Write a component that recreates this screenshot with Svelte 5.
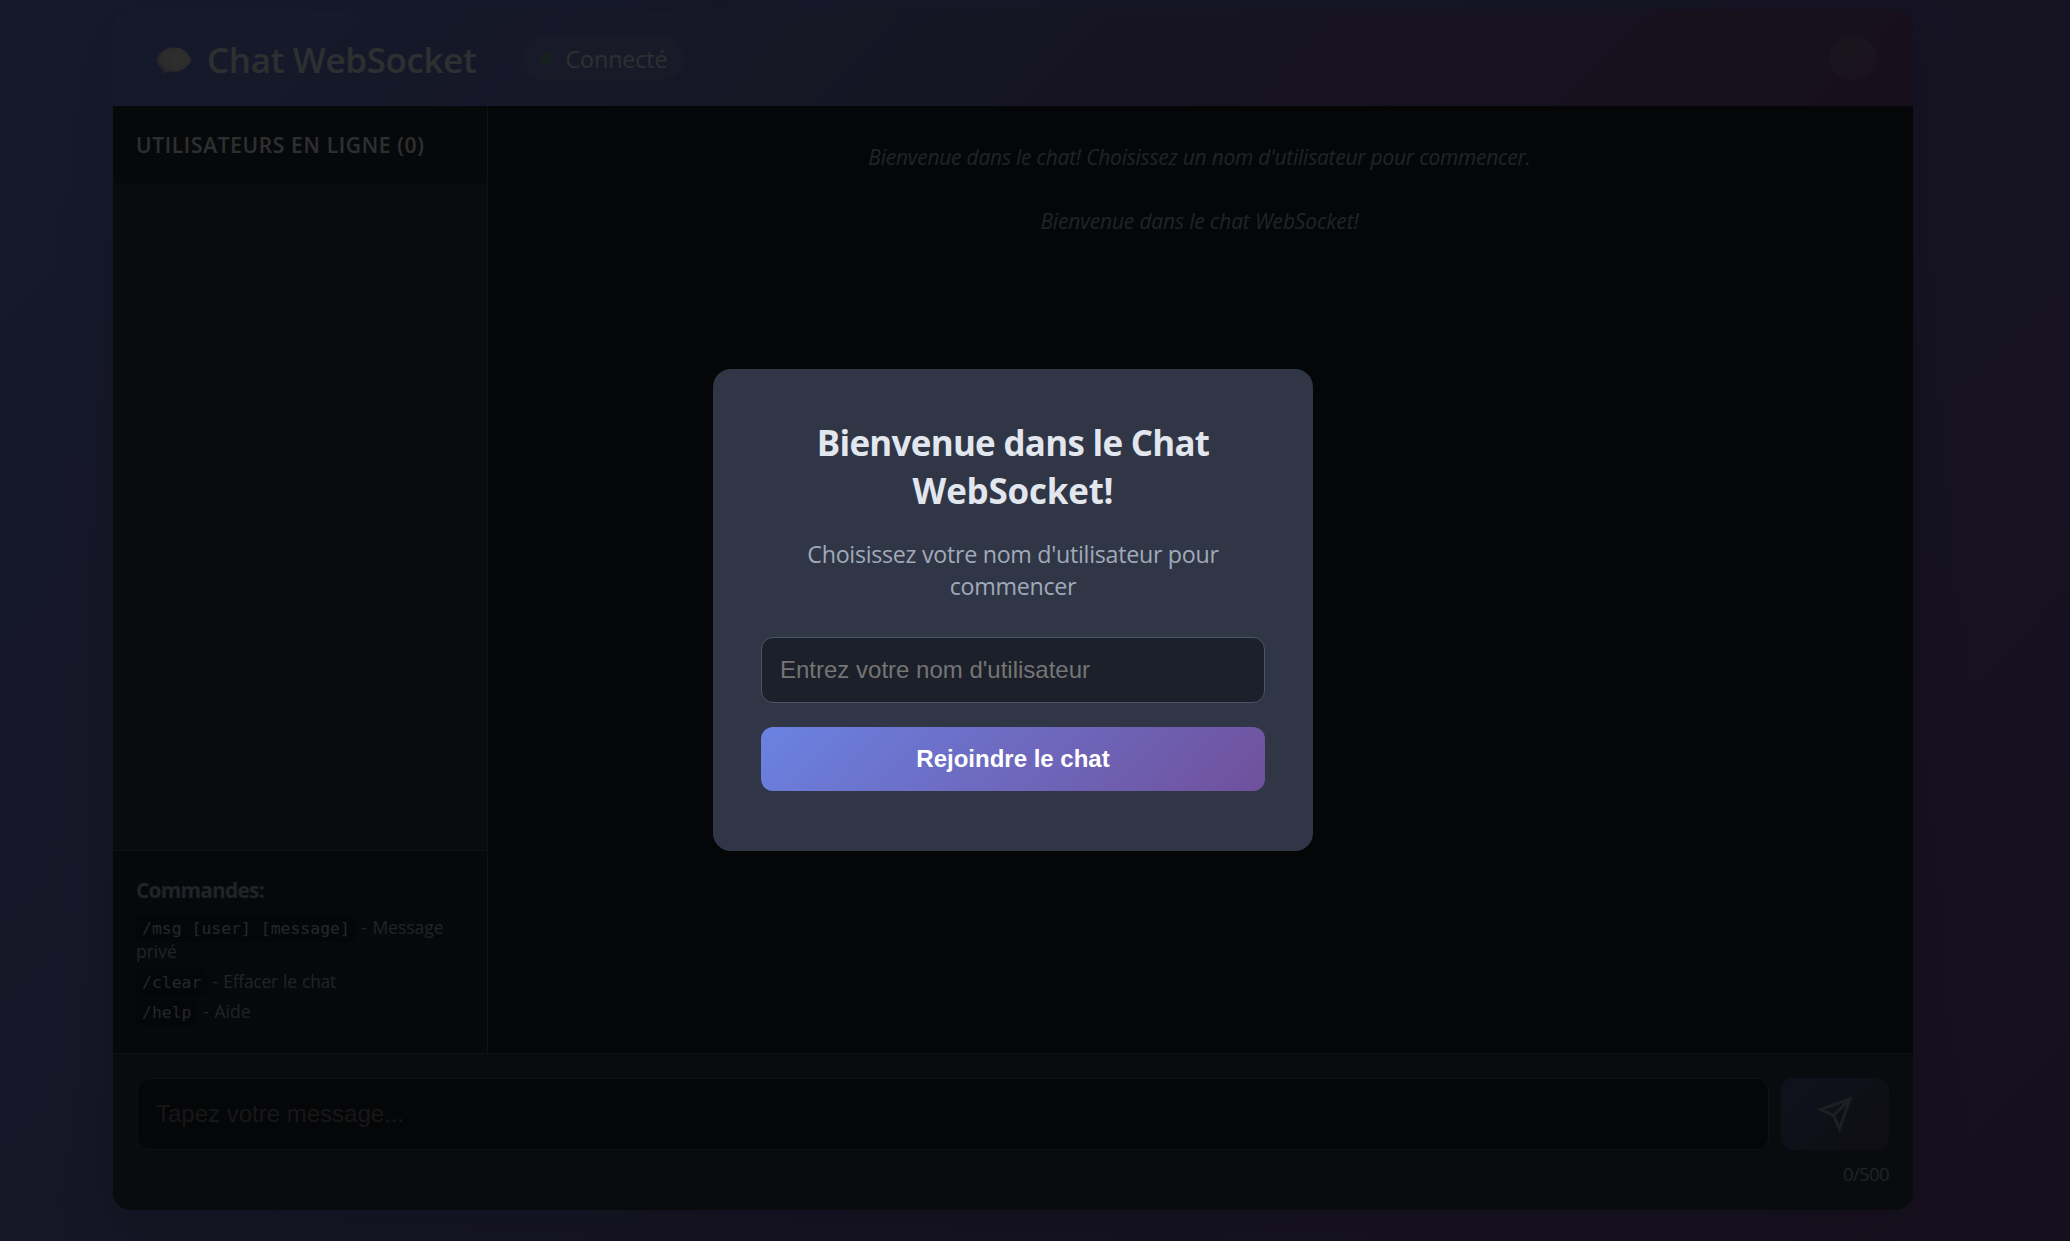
<script>
  const commands = [
    { code: '/msg [user] [message]', label: '- Message privé', tone: 'plain' },
    { code: '/clear', label: '- Effacer le chat', tone: 'tight' },
    { code: '/help', label: '- Aide', tone: 'wide' }
  ];
  const messages = [
    "Bienvenue dans le chat! Choisissez un nom d'utilisateur pour commencer.",
    'Bienvenue dans le chat WebSocket!'
  ];
  let draft = $state('');
  let username = $state('');
</script>

<div class="page">
  <main class="app">
    <header class="topbar">
      <svg class="bubble" viewBox="0 0 36 28" aria-hidden="true">
        <defs>
          <radialGradient id="bubbleFill" cx="0.58" cy="0.42" r="0.7">
            <stop offset="0" stop-color="#efebe8" />
            <stop offset="0.6" stop-color="#dcd8d8" />
            <stop offset="1" stop-color="#a597b0" />
          </radialGradient>
        </defs>
        <path
          fill="url(#bubbleFill)"
          d="M18 0.5C25.500 0.500 30 4 32.500 8C34 10 35 11.500 35 12.800C35 14 34 15.800 32.500 17.500C29 22 24.500 24.700 18 24.700C15.500 24.700 14 24.500 12.500 24.200C10.800 25.800 9 26.500 7 26.700C7.400 25 7.400 23.400 6.600 21.800C3.500 19.500 0.500 15.500 0.500 12.800C0.500 11.500 1.500 10 3 8C6 3.500 10.500 0.500 18 0.500Z"
        />
      </svg>
      <h1>Chat WebSocket</h1>
      <div class="status"><span class="dot"></span><span class="state">Connecté</span></div>
      <button class="theme" aria-label="Thème"></button>
    </header>

    <div class="middle">
      <aside>
        <h2>UTILISATEURS EN LIGNE (0)</h2>
        <div class="users"></div>
        <div class="help">
          <h3>Commandes:</h3>
          {#each commands as c}
            <p class={c.tone}><code>{c.code}</code> {c.label}</p>
          {/each}
        </div>
      </aside>
      <section class="messages">
        {#each messages as m}
          <p>{m}</p>
        {/each}
      </section>
    </div>

    <footer>
      <div class="compose">
        <input placeholder="Tapez votre message..." maxlength="500" bind:value={draft} />
        <button class="send" aria-label="Envoyer">
          <svg viewBox="0 0 24 24" fill="none" stroke="currentColor" stroke-width="2">
            <line x1="22" y1="2" x2="11" y2="13" />
            <polygon points="22 2 15 22 11 13 2 9 22 2" />
          </svg>
        </button>
      </div>
      <div class="counter">{draft.length}/500</div>
    </footer>
  </main>
</div>

<div class="overlay">
  <div class="modal">
    <h2><span class="lead">Bienvenue dans le Chat</span> <span class="tail">WebSocket!</span></h2>
    <p>Choisissez votre nom d'utilisateur pour commencer</p>
    <input placeholder="Entrez votre nom d'utilisateur" bind:value={username} />
    <button>Rejoindre le chat</button>
  </div>
</div>

<style>
  :global(body) {
    margin: 0;
    overflow: hidden;
  }
  * {
    box-sizing: border-box;
  }
  h1, h2, h3, p {
    margin: 0;
  }
  input, button {
    font-family: "Liberation Sans", Arial, sans-serif;
    font-size: 24px;
    outline: none;
  }
  input::placeholder {
    color: #757575;
    opacity: 1;
  }
  .page {
    height: 1241px;
    padding: 10px 44px 31px 0;
    display: flex;
    justify-content: center;
    background: linear-gradient(135deg, #6a80d8 0%, #704f94 100%);
    font-family: "Open Sans", "Noto Sans", sans-serif;
    color: #e2e8f0;
  }
  .app {
    width: 1800px;
    height: 1200px;
    display: flex;
    flex-direction: column;
    border-radius: 18px;
    overflow: hidden;
    background: #1a202c;
    box-shadow: 0 20px 60px rgba(0, 0, 0, 0.16);
  }

  .topbar {
    height: 96px;
    flex: none;
    display: flex;
    align-items: center;
    padding: 0 36px 0 43px;
    background: linear-gradient(135deg, #6a82d8 0%, #764f8a 100%);
  }
  .bubble {
    width: 36px;
    height: 28px;
    margin-top: 5px;
  }
  h1 {
    margin-left: 15px;
    padding-top: 3px;
    font-size: 34.92px;
    font-weight: 600;
    line-height: 48px;
    letter-spacing: -0.32px;
    white-space: nowrap;
  }
  .status {
    height: 44px;
    margin-left: 47px;
    padding: 0 17px 0 16px;
    display: flex;
    align-items: center;
    gap: 14px;
    border-radius: 30px;
    background: rgba(255, 255, 255, 0.1);
  }
  .dot {
    width: 12px;
    height: 12px;
    border-radius: 50%;
    background: #6aae8c;
    opacity: 0.75;
  }
  .state {
    padding-top: 2px;
    font-size: 23.28px;
    line-height: 32px;
    letter-spacing: -0.1px;
  }
  .theme {
    width: 48px;
    height: 44px;
    margin-left: auto;
    border: 0;
    border-radius: 50%;
    background: rgba(255, 255, 255, 0.1);
  }

  .middle {
    flex: 1;
    min-height: 0;
    display: flex;
  }
  aside {
    width: 375px;
    display: flex;
    flex-direction: column;
    background: #2d3748;
    border-right: 1px solid #4a5568;
  }
  aside h2 {
    height: 77px;
    padding: 24px 23px 0;
    background: #242c36;
    font-size: 20.95px;
    font-weight: 600;
    line-height: 30px;
    letter-spacing: 0.68px;
    white-space: nowrap;
  }
  .users {
    flex: 1;
  }
  .help {
    padding: 24px 24px 24px 23px;
    background: #242c36;
    border-top: 1px solid #4a5568;
    color: #a0aec0;
  }
  h3 {
    margin-bottom: 10px;
    font-size: 20.95px;
    font-weight: 700;
    line-height: 30px;
    letter-spacing: -0.8px;
  }
  .help p {
    margin-bottom: 6px;
    font-size: 17.46px;
    line-height: 24px;
    word-spacing: 1px;
  }
  .help p.tight {
    letter-spacing: -0.26px;
  }
  .help p.wide {
    letter-spacing: 0.1px;
  }
  code {
    padding: 4px 6px;
    border-radius: 6px;
    background: #1a202c;
    color: #b4c0d0;
    font-family: "DejaVu Sans Mono", monospace;
    font-size: 16.45px;
    line-height: 16px;
    letter-spacing: 0;
    word-spacing: 0;
  }
  .messages {
    flex: 1;
    padding: 37px 2px 0 0;
    text-align: center;
    font-style: italic;
    font-size: 20.95px;
    line-height: 29px;
    letter-spacing: -0.22px;
    color: #a0aec0;
  }
  .messages p + p {
    margin-top: 35px;
    letter-spacing: -0.141px;
  }

  footer {
    height: 157px;
    flex: none;
    padding: 24px;
    background: #2d3748;
    border-top: 1px solid #4a5568;
  }
  .compose {
    display: flex;
    gap: 12px;
  }
  .compose input {
    flex: 1;
    height: 72px;
    padding: 0 18px;
    border: 1px solid #4a5568;
    border-radius: 12px;
    background: #1a202c;
    color: #e2e8f0;
  }
  .send {
    width: 108px;
    height: 72px;
    padding: 0;
    display: flex;
    align-items: center;
    justify-content: center;
    border: 0;
    border-radius: 12px;
    background: linear-gradient(135deg, #667ed2 0%, #6c5088 100%);
    color: #fff;
    opacity: 0.5;
  }
  .send svg {
    width: 36px;
    height: 36px;
  }
  .counter {
    margin-top: 11px;
    font-size: 18.62px;
    line-height: 26px;
    letter-spacing: -0.686px;
    text-align: right;
    color: #a0aec0;
  }

  .overlay {
    position: fixed;
    inset: 0;
    padding: 0 44px 21px 0;
    display: flex;
    align-items: center;
    justify-content: center;
    background: rgba(0, 0, 0, 0.8);
    font-family: "Open Sans", "Noto Sans", sans-serif;
  }
  .modal {
    width: 600px;
    height: 482px;
    padding: 50px 48px 60px;
    border-radius: 18px;
    background: #303645;
    text-align: center;
    display: flex;
    flex-direction: column;
  }
  .modal h2 {
    font-size: 34.92px;
    font-weight: 700;
    line-height: 48px;
    color: #e2e6ee;
  }
  .lead {
    letter-spacing: -0.7px;
  }
  .tail {
    letter-spacing: -0.18px;
  }
  .modal p {
    margin: 23px 0 35px;
    font-size: 23.28px;
    line-height: 32px;
    letter-spacing: -0.3px;
    color: #a0aaba;
  }
  .modal input {
    height: 66px;
    padding: 0 18px;
    border: 1px solid #4b5568;
    border-radius: 12px;
    background: #1c202a;
    color: #e2e8f0;
  }
  .modal button {
    height: 64px;
    margin-top: 24px;
    border: 0;
    border-radius: 12px;
    background: linear-gradient(135deg, #6a82e2 0%, #70509b 100%);
    color: #fff;
    font-weight: 700;
  }
</style>
